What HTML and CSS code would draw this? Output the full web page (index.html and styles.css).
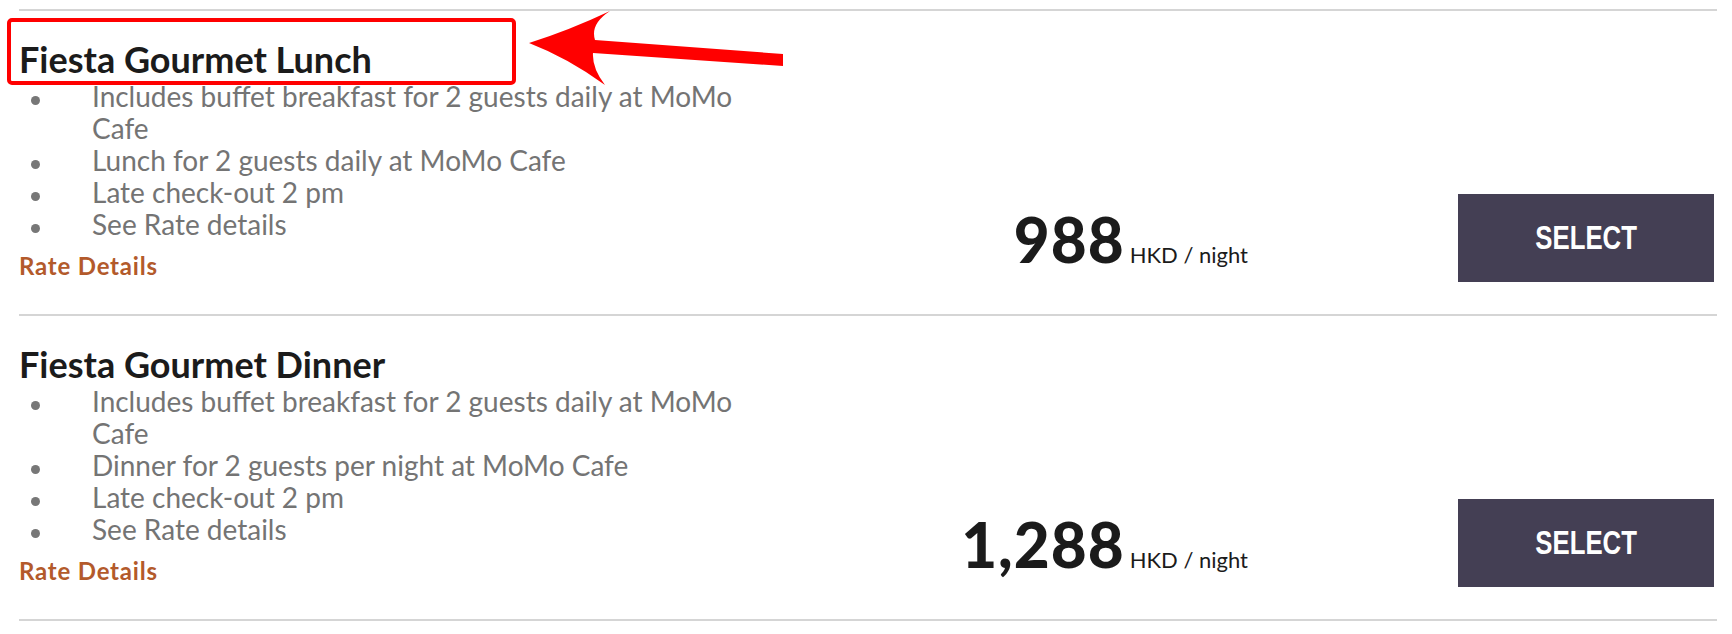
FILE: index.html
```html
<!DOCTYPE html>
<html lang="en">
<head>
    <meta charset="UTF-8">
    <meta name="viewport" content="width=device-width, initial-scale=1.0">
    <title>Room Rates</title>
    <link rel="stylesheet" href="styles.css">
</head>
<body>
    <div class="rates">
        <div class="rate">
            <div class="rate-info">
                <h3 class="rate-name">Fiesta Gourmet Lunch</h3>
                <ul class="perks">
                    <li>Includes buffet breakfast for 2 guests daily at MoMo Cafe</li>
                    <li>Lunch for 2 guests daily at MoMo Cafe</li>
                    <li>Late check-out 2 pm</li>
                    <li>See Rate details</li>
                </ul>
                <a href="#" class="rate-link">Rate Details</a>
            </div>
            <div class="rate-price">
                <span class="amount">988</span>
                <span class="unit">HKD / night</span>
            </div>
            <button class="select-btn"><span>SELECT</span></button>
        </div>

        <div class="rate">
            <div class="rate-info">
                <h3 class="rate-name">Fiesta Gourmet Dinner</h3>
                <ul class="perks">
                    <li>Includes buffet breakfast for 2 guests daily at MoMo Cafe</li>
                    <li>Dinner for 2 guests per night at MoMo Cafe</li>
                    <li>Late check-out 2 pm</li>
                    <li>See Rate details</li>
                </ul>
                <a href="#" class="rate-link">Rate Details</a>
            </div>
            <div class="rate-price">
                <span class="amount">1,288</span>
                <span class="unit">HKD / night</span>
            </div>
            <button class="select-btn"><span>SELECT</span></button>
        </div>
    </div>

    <!-- annotation drawn over the screenshot -->
    <div class="callout-box"></div>
    <svg class="callout-arrow" width="800" height="100" viewBox="0 0 800 100">
        <path d="M529 43 Q570 30 610 11 Q590 24 595 40 L783 54 L783 66 L593 53 Q592 68 605 85 Q568 58 529 43 Z" fill="#ff0000"/>
    </svg>
</body>
</html>
```

FILE: styles.css
```css
body {
    font-family: Lato, "Open Sans", sans-serif;
    margin: 0;
    background-color: #fff;
    color: #1b1b1b;
}
.rates {
    padding: 9px 15px 0 19px;
}
.rate {
    display: flex;
    align-items: flex-end;
    border-top: 2px solid #d5d5d5;
    padding: 29px 3px 32px 0;
}
.rate:last-child {
    border-bottom: 2px solid #d5d5d5;
}
.rate-info {
    width: 740px;
    margin-bottom: 2px;
}
.rate-name {
    font-size: 36px;
    line-height: 38px;
    font-weight: 700;
    margin: 0;
    color: #1b1b1b;
}
.perks {
    list-style: none;
    margin: 2px 0 0;
    padding: 0;
}
.perks li {
    display: flex;
    font-size: 28px;
    line-height: 32px;
    color: #747474;
}
.perks li::before {
    content: "";
    flex-shrink: 0;
    width: 9px;
    height: 9px;
    border-radius: 50%;
    background-color: #777;
    margin: 16px 52px 0 12px;
}
.rate-link {
    display: block;
    margin-top: 12px;
    font-size: 24px;
    line-height: 28px;
    font-weight: 700;
    letter-spacing: 0.8px;
    color: #b35a2b;
    text-decoration: none;
}
.rate-price {
    flex: 1;
    display: flex;
    justify-content: flex-end;
    align-items: baseline;
    margin-right: 210px;
    margin-bottom: 12px;
}
.amount {
    font-size: 62px;
    line-height: 62px;
    font-weight: 900;
    letter-spacing: 1px;
    color: #1b1b1b;
}
.unit {
    font-size: 22px;
    margin-left: 5px;
    color: #1b1b1b;
}
.select-btn {
    width: 256px;
    height: 88px;
    border: none;
    background-color: #443f54;
    color: #fff;
    font-family: "Liberation Sans", Arial, sans-serif;
    font-weight: 700;
    font-size: 33px;
    cursor: pointer;
}
.select-btn span {
    display: inline-block;
    transform: scaleX(0.78);
}
.callout-box {
    position: absolute;
    left: 7px;
    top: 18px;
    width: 501px;
    height: 59px;
    border: 4px solid #ff0000;
    border-radius: 5px;
}
.callout-arrow {
    position: absolute;
    left: 0;
    top: 0;
}
```
